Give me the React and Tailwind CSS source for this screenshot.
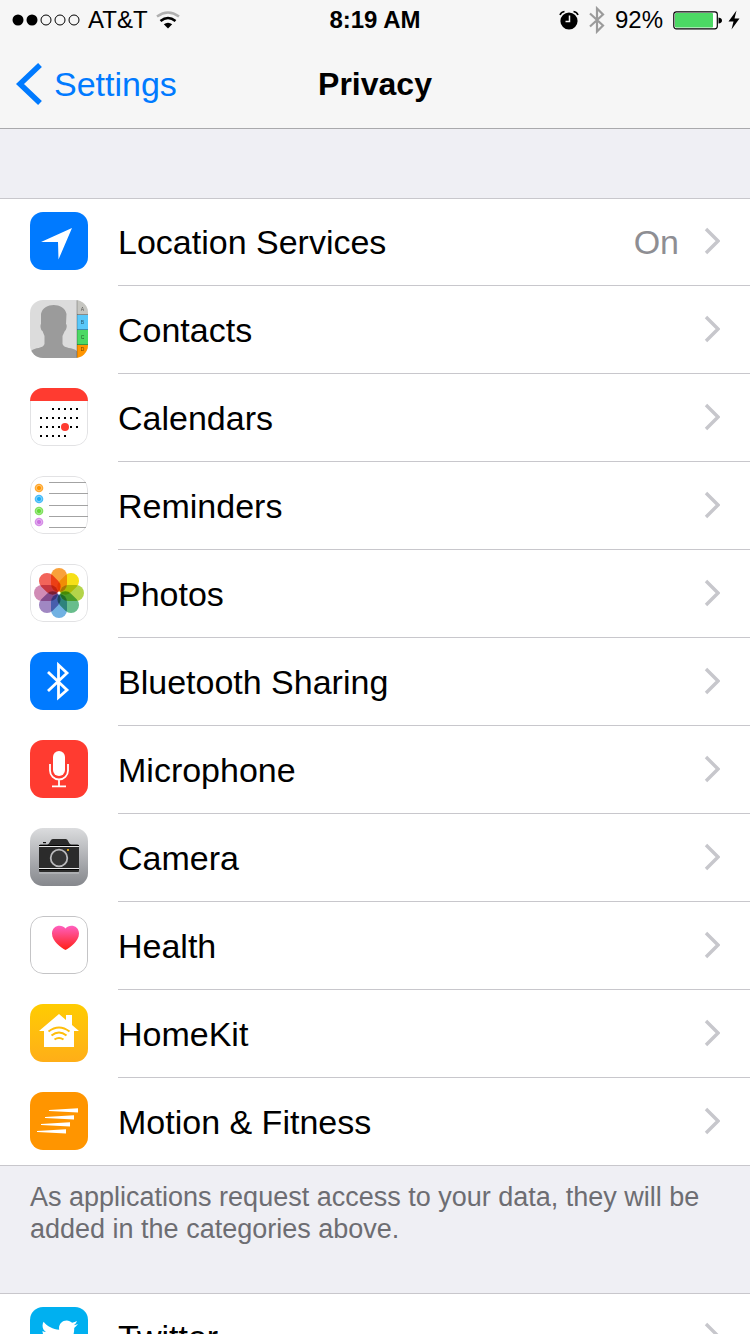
import React from "react";
import { FaTwitter } from "react-icons/fa";

// ── App icons (58 x 58) ──────────────────────────────────────────────────────
const Tile = ({ className = "", children }) => (
  <svg viewBox="0 0 58 58" aria-hidden="true" className={`mt-3.5 size-[58px] shrink-0 self-start rounded-[13px] ${className}`}>
    {children}
  </svg>
);

const Outline = ({ color = "#e2e2e4" }) => (
  <rect x="0.5" y="0.5" width="57" height="57" rx="12.5" fill="none" stroke={color} />
);

const LocationIcon = () => (
  <Tile className="bg-[#007aff]">
    <path d="M11 30 42 16 28.5 47.5 28 30Z" fill="#fff" />
  </Tile>
);

const CONTACT_TABS = [
  { letter: "A", y: 0,  textY: 11, color: "#c6c6c1" },
  { letter: "B", y: 15, textY: 24, color: "#5ac8fa" },
  { letter: "C", y: 30, textY: 39, color: "#4cd964" },
  { letter: "D", y: 45, textY: 51, color: "#ff9500" },
];

const ContactsIcon = () => (
  <Tile className="bg-[#dcdcdc]">
    <path
      d="M1 58V51C5 47 13 49 14.5 44V36L12.500 31C10.500 30 10 25 11 24L11 14C12 8 18 5 23.700 5S35.500 8 36.500 14L36 24C37.500 25 36.500 30 34.800 31L32.500 36V44C34 49 43 47 47 51V58Z"
      fill="#9b9b9b"
    />
    {CONTACT_TABS.map(({ letter, y, textY, color }) => (
      <g key={letter}>
        <rect x="47" y={y} width="11" height="15" fill={color} />
        <rect x="47" y={y + 14} width="11" height="1" fill="#000" opacity="0.3" />
        <text x="52.500" y={textY} fontSize="5" textAnchor="middle" fill="#000" opacity="0.6" fontFamily="Liberation Sans">
          {letter}
        </text>
      </g>
    ))}
    <rect x="46.500" width="1" height="58" fill="#000" opacity="0.25" />
  </Tile>
);

const CALENDAR_DOTS = [
  { y: 21, xs: [23, 29, 35, 41, 47] },
  { y: 30, xs: [11, 17, 23, 29, 35, 41, 47] },
  { y: 39, xs: [11, 17, 23, 29, 35, 41, 47] },
  { y: 48, xs: [11, 17, 23, 29, 35] },
];

const CalendarsIcon = () => (
  <Tile className="bg-white">
    <Outline />
    <rect width="58" height="13" fill="#ff3b30" />
    {CALENDAR_DOTS.map(({ y, xs }) =>
      xs.map((x) => <rect key={`${x}-${y}`} x={x - 1} y={y - 1} width="2" height="2" fill="#000" />)
    )}
    <circle cx="35" cy="39" r="4" fill="#ff3b30" />
  </Tile>
);

const REMINDER_DOTS = [
  { y: 12, color: "#ff9500" },
  { y: 23, color: "#1badf8" },
  { y: 35, color: "#63da38" },
  { y: 46, color: "#cc73e1" },
];

const RemindersIcon = () => (
  <Tile className="bg-white">
    <Outline />
    {REMINDER_DOTS.map(({ y, color }) => (
      <g key={y} fill={color}>
        <circle cx="9" cy={y} r="4.300" opacity="0.8" />
        <circle cx="9" cy={y} r="2.600" stroke="#fff" strokeWidth="0.400" />
      </g>
    ))}
    <path d="M19 6.500H56M19 17.500H58M19 29.500H58M19 40.500H58M19 51.500H56" stroke="#a3a3a3" />
  </Tile>
);

const PETALS = ["#f9a13a", "#f6e017", "#b4d44a", "#68bd8c", "#71b1e2", "#a087c2", "#d18bb5", "#f2645a"];

const PhotosIcon = () => (
  <Tile className="isolate bg-white">
    <Outline />
    {PETALS.map((color, i) => (
      <rect
        key={color}
        x="21"
        y="4"
        width="16"
        height="24"
        rx="8"
        fill={color}
        transform={`rotate(${i * 45} 29 29)`}
        className="mix-blend-multiply"
      />
    ))}
    <circle cx="29" cy="29" r="1.500" fill="#fff" />
  </Tile>
);

const BluetoothIcon = () => (
  <Tile className="bg-[#007aff]">
    <path d="M18 20 37 38 28.500 45.500V13L37 21 18 39" fill="none" stroke="#fff" strokeWidth="2.800" />
  </Tile>
);

const MicrophoneIcon = () => (
  <Tile className="bg-[#ff3b30]">
    <rect x="23" y="11" width="12" height="25" rx="6" fill="#fff" />
    <path d="M20 24V30.500A9 9 0 0 0 38 30.500V24M29 39.500V46M22 46.300H36" fill="none" stroke="#fff" strokeWidth="1.800" />
  </Tile>
);

const CameraIcon = () => (
  <Tile className="bg-linear-to-b from-[#dbdcde] to-[#86888d]">
    <path d="M9 44.500H49V45.500H9Z" fill="#fff" opacity="0.4" />
    <path d="M9 18Q9 16.500 10.500 16.500H17C20 16.500 20 11 23 11H35.500C38.500 11 38.500 16.500 41.500 16.500H47.500Q49 16.500 49 18V43Q49 44 48 44H10Q9 44 9 43Z" fill="#2b2b2b" />
    <rect x="13" y="14" width="3" height="1.200" fill="#111" />
    <path d="M9 18.500H49M9 40.500H49" stroke="#e8e8e8" />
    <path d="M9 17.500H49M9 41.500H49" stroke="#000" />
    <circle cx="29" cy="30" r="8.300" fill="#353535" stroke="#b9b9bb" strokeWidth="1.800" />
    <rect x="37" y="21" width="2" height="2" fill="#d9a013" />
  </Tile>
);

const HealthIcon = () => (
  <Tile className="bg-white">
    <defs>
      <linearGradient id="heart" x1="0" y1="0" x2="0" y2="1">
        <stop offset="0" stopColor="#ff5fbf" />
        <stop offset="1" stopColor="#ff2014" />
      </linearGradient>
    </defs>
    <Outline color="#c4c4c6" />
    <path d="M35.500 34C31 31.500 22 25.500 22 17.500C22 9.500 31.500 7.500 35.500 12.500C39.500 7.500 49 9.500 49 17.500C49 25.500 40 31.500 35.500 34Z" fill="url(#heart)" />
  </Tile>
);

const HomeKitIcon = () => (
  <Tile className="bg-linear-to-b from-[#ffcc00] to-[#ffae17]">
    <path d="M29 10 36 16V11H42V21L49 27H44V43H14V27H9Z" fill="#fff" />
    <path d="M18.500 27.500Q29 19.500 39.500 27.500M21.500 31.500Q29 25.500 36.500 31.500M24.500 35.500Q29 32.500 33.500 35.500" fill="none" stroke="#ffbe0b" strokeWidth="2" />
  </Tile>
);

const MotionIcon = () => (
  <Tile className="bg-[#ff9500]">
    <path d="M19 18 48 16.200V20.500L19 19ZM15 25 44 23.200V27.500L15 26ZM11 32 40 30.200V34.500L11 33ZM7 39 36 37.200V41.500L7 40Z" fill="#fff" />
  </Tile>
);

const TwitterIcon = () => (
  <Tile className="bg-[#00b0f0]">
    <FaTwitter x="11" y="10" size={37} color="#fff" />
  </Tile>
);

// ── Status bar glyphs ────────────────────────────────────────────────────────
const Signal = () => (
  <svg viewBox="0 0 68 12" role="img" aria-label="Signal strength" className="h-3 w-[68px]">
    {[6, 20, 34, 48, 62].map((cx, i) => (
      <circle key={cx} cx={cx} cy="6" r={i < 2 ? 5.5 : 5} fill={i < 2 ? "#000" : "none"} stroke={i < 2 ? "none" : "#000"} />
    ))}
  </svg>
);

const Wifi = () => (
  <svg viewBox="0 0 24 18" role="img" aria-label="Wi-Fi" className="h-[18px] w-6" fill="none">
    <path d="M1 5.500Q12-2.500 23 5.500" stroke="#b0b0b0" strokeWidth="2.600" />
    <path d="M4.500 10Q12 4 19.500 10" stroke="#000" strokeWidth="2.600" />
    <path d="M12 17.500 7.800 13.300Q12 10.300 16.200 13.300Z" fill="#000" />
  </svg>
);

const Alarm = () => (
  <svg viewBox="0 0 20 20" role="img" aria-label="Alarm" className="size-5" fill="none">
    <circle cx="10" cy="11" r="8.600" fill="#000" />
    <path d="M10.500 5.500V11.500H6.500" stroke="#f6f6f6" strokeWidth="1.500" />
    <path d="M1 5Q2 2 5.500 1.500M19 5Q18 2 14.500 1.500" stroke="#000" strokeWidth="1.600" />
  </svg>
);

const BluetoothStatus = () => (
  <svg viewBox="0 0 16 28" role="img" aria-label="Bluetooth" className="h-7 w-4" fill="none">
    <path d="M1 7.500 14 19.500 8 25.500V2.500L14 8.500 1 20.500" stroke="#9b9b9b" strokeWidth="2.200" />
  </svg>
);

const Battery = () => (
  <svg viewBox="0 0 49 20" role="img" aria-label="Battery" className="h-5 w-[49px]">
    <rect x="0.800" y="1.800" width="43.500" height="17" rx="2.500" fill="#fff" stroke="#000" strokeWidth="1.200" />
    <rect x="2" y="3" width="38" height="14.500" rx="1" fill="#4cd964" />
    <path d="M45.500 7.500Q49 8 49 10.500T45.500 13.500Z" fill="#000" />
  </svg>
);

const Bolt = () => (
  <svg viewBox="0 0 12 20" role="img" aria-label="Charging" className="h-5 w-3">
    <path d="M8.500 0.500 0.500 11.500H5.500L3.500 19.500 11.500 8.500H6.500Z" fill="#000" />
  </svg>
);

// ── Rows ─────────────────────────────────────────────────────────────────────
const CATEGORIES = [
  { label: "Location Services", Icon: LocationIcon, value: "On" },
  { label: "Contacts",          Icon: ContactsIcon },
  { label: "Calendars",         Icon: CalendarsIcon },
  { label: "Reminders",         Icon: RemindersIcon },
  { label: "Photos",            Icon: PhotosIcon },
  { label: "Bluetooth Sharing", Icon: BluetoothIcon },
  { label: "Microphone",        Icon: MicrophoneIcon },
  { label: "Camera",            Icon: CameraIcon },
  { label: "Health",            Icon: HealthIcon },
  { label: "HomeKit",           Icon: HomeKitIcon },
  { label: "Motion & Fitness",  Icon: MotionIcon },
];

const SOCIAL = [{ label: "Twitter", Icon: TwitterIcon }];

const Row = ({ label, Icon, value }) => (
  <li className="group first:-mt-px last:border-b last:border-[#c8c7cc]">
    <a href="#" className="flex h-[88px] gap-[30px] pl-[30px] group-last:h-[87px]">
      <Icon />
      <span className="flex flex-1 items-center border-b border-[#c8c7cc] pr-[30px] group-last:border-b-0">
        <span className="flex-1 text-[34px] leading-10">{label}</span>
        {value && <span className="mr-[25px] text-[34px] leading-10 text-[#8e8e93]">{value}</span>}
        <svg viewBox="0 0 16 28" aria-hidden="true" className="mb-0.5 h-7 w-4">
          <path d="M2 2 14 14 2 26" fill="none" stroke="#c7c7cc" strokeWidth="3.400" />
        </svg>
      </span>
    </a>
  </li>
);

const Group = ({ rows }) => (
  <ul className="border-t border-[#c8c7cc] bg-white">
    {rows.map((row) => (
      <Row key={row.label} {...row} />
    ))}
  </ul>
);

// ── Main Component ───────────────────────────────────────────────────────────
export default function App() {
  return (
    <div className="h-screen overflow-hidden bg-[#efeff4] font-['Liberation_Sans',Arial,sans-serif] text-black">
      <header className="border-b border-[#a9a9ac] bg-[#f6f6f6]">
        {/* Status bar */}
        <div className="grid h-10 grid-cols-[1fr_auto_1fr] items-center px-2.5 text-2xl">
          <div className="flex items-center gap-2 pl-0.5">
            <Signal />
            <span>AT&amp;T</span>
            <Wifi />
          </div>
          <time className="font-bold">8:19 AM</time>
          <div className="flex items-center justify-end gap-2.5">
            <Alarm />
            <BluetoothStatus />
            <span>92%</span>
            <div className="flex items-center gap-1.5">
              <Battery />
              <Bolt />
            </div>
          </div>
        </div>

        {/* Navigation bar */}
        <nav className="grid h-[88px] grid-cols-[1fr_auto_1fr] items-center px-4">
          <button type="button" className="flex items-center gap-3 justify-self-start text-[34px] leading-10 text-[#007aff]">
            <svg viewBox="0 0 26 42" aria-hidden="true" className="h-[42px] w-[26px]">
              <path d="M24 2 4 21 24 40" fill="none" stroke="#007aff" strokeWidth="5.500" />
            </svg>
            Settings
          </button>
          <h1 className="text-[32px] leading-10 font-bold">Privacy</h1>
        </nav>
      </header>

      <main className="pt-[69px]">
        <Group rows={CATEGORIES} />
        <p className="px-[30px] pt-[15px] pb-12 text-[27px] leading-8 text-[#6d6d72]">
          As applications request access to your data, they will be added in the categories above.
        </p>
        <Group rows={SOCIAL} />
      </main>
    </div>
  );
}
